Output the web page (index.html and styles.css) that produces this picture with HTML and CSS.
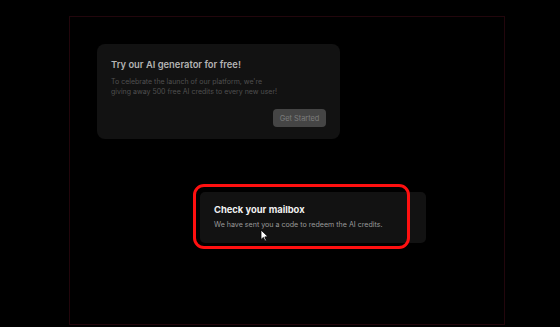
FILE: index.html
```html
<!DOCTYPE html>
<html lang="en">
<head>
    <meta charset="UTF-8">
    <meta name="viewport" content="width=device-width, initial-scale=1.0">
    <title>AI credits</title>
    <link rel="stylesheet" href="styles.css">
</head>
<body>
    <div class="frame">
        <div class="promo">
            <h2>Try our AI generator for free!</h2>
            <p>To celebrate the launch of our platform, we're<br>giving away 500 free AI credits to every new user!</p>
            <div class="row">
                <button type="button" class="button">Get Started</button>
            </div>
        </div>
        <div class="toast">
            <h3>Check your mailbox</h3>
            <p>We have sent you a code to redeem the AI credits.</p>
            <div class="ring"></div>
            <svg class="cursor" width="9" height="13" viewBox="0 0 9 13">
                <path d="M1 1 L1 10.5 L3.4 8.4 L5 12 L6.4 11.4 L4.8 7.9 L8 7.7 Z" fill="#fff" stroke="#000" stroke-width="0.8"/>
            </svg>
        </div>
    </div>
</body>
</html>
```

FILE: styles.css
```css
*{
    margin: 0;
    padding: 0;
    box-sizing: border-box;
}
html,body{
    width: 100%;
    height: 100%;
    background-color: #000;
    font-family: Inter, "Liberation Sans", sans-serif;
    overflow: hidden;
}
.frame{
    margin-left: 69px;
    margin-top: 16px;
    width: 436px;
    height: 309px;
    border: 1px solid #22060c;
    padding-top: 27px;
    padding-left: 27px;
}
.promo{
    width: 243px;
    height: 95px;
    background-color: #121212;
    border-radius: 8px;
    padding: 14px 14px 0 14px;
}
.promo h2{
    font-size: 9.4px;
    font-weight: 600;
    color: #b4b4b4;
    line-height: 14px;
}
.promo p{
    margin-top: 5px;
    font-size: 7px;
    line-height: 10px;
    color: #505050;
}
.row{
    display: flex;
    justify-content: flex-end;
    margin-top: 12px;
}
.button{
    width: 53px;
    height: 18px;
    border: none;
    border-radius: 4px;
    background-color: #454545;
    color: #7c7c7c;
    font-family: Inter, "Liberation Sans", sans-serif;
    font-size: 7.4px;
}
.toast{
    position: relative;
    margin-top: 53px;
    margin-left: 103px;
    width: 226px;
    height: 51px;
    background-color: #121212;
    border-radius: 5px;
    padding: 11px 14px 0 14px;
}
.toast h3{
    font-size: 9.4px;
    font-weight: 700;
    color: #f0f0f0;
    line-height: 13px;
}
.toast p{
    margin-top: 4px;
    font-size: 7.1px;
    line-height: 10px;
    color: #9a9a9a;
}
.ring{
    position: absolute;
    left: -7px;
    top: -8px;
    width: 217px;
    height: 65px;
    border: 3px solid #ff1010;
    border-radius: 11px;
}
.cursor{
    position: absolute;
    left: 60px;
    top: 37px;
}
```
